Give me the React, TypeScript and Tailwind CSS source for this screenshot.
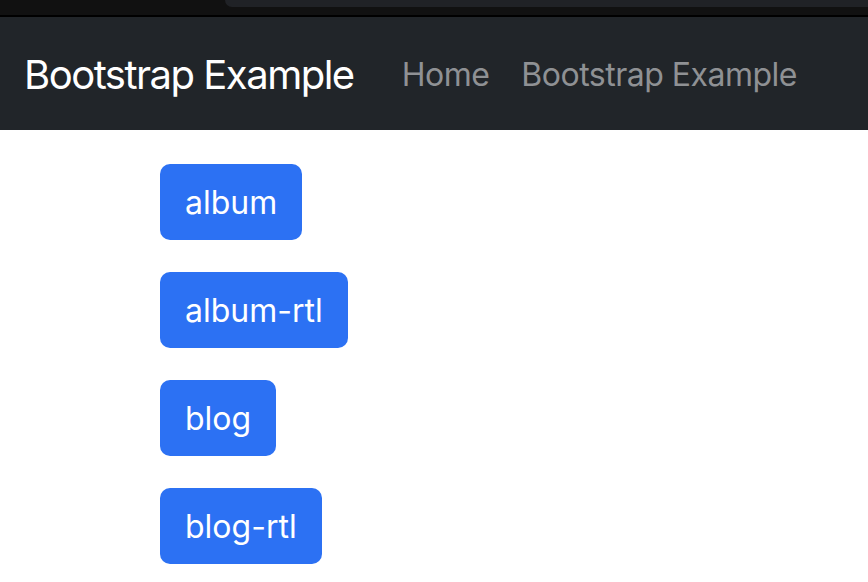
import React from "react";

const items = ["album", "album-rtl", "blog", "blog-rtl"];

export default function App() {
  return (
    <div className="w-[868px] h-[582px] overflow-hidden bg-white" style={{ fontFamily: "Inter, 'Noto Sans', sans-serif" }}>
      <div className="h-[15px] bg-[#111111] flex">
        <div className="w-[225px]" />
        <div className="flex-1 h-[7px] bg-[#202226] rounded-bl-[10px]" />
      </div>
      <div className="h-[2px] bg-black" />
      <nav className="h-[113px] bg-[#212529] flex items-center px-[24px]">
        <span className="text-white text-[40px] leading-[60px] mr-[32px] tracking-[-1.5px] pt-[2px]">Bootstrap Example</span>
        <span className="text-[#8f9194] text-[32px] leading-[48px] px-[16px] tracking-[-0.5px] pt-[2px]">Home</span>
        <span className="text-[#8f9194] text-[32px] leading-[48px] px-[16px] tracking-[-0.5px] pt-[2px]">Bootstrap Example</span>
      </nav>
      <div className="pl-[160px] pt-[34px] flex flex-col items-start gap-[32px]">
        {items.map((t) => (
          <div key={t} className="h-[76px] px-[25px] rounded-[10px] bg-[#2c71f3] text-white text-[32px] leading-[78px] tracking-[0px]">
            {t}
          </div>
        ))}
      </div>
    </div>
  );
}
